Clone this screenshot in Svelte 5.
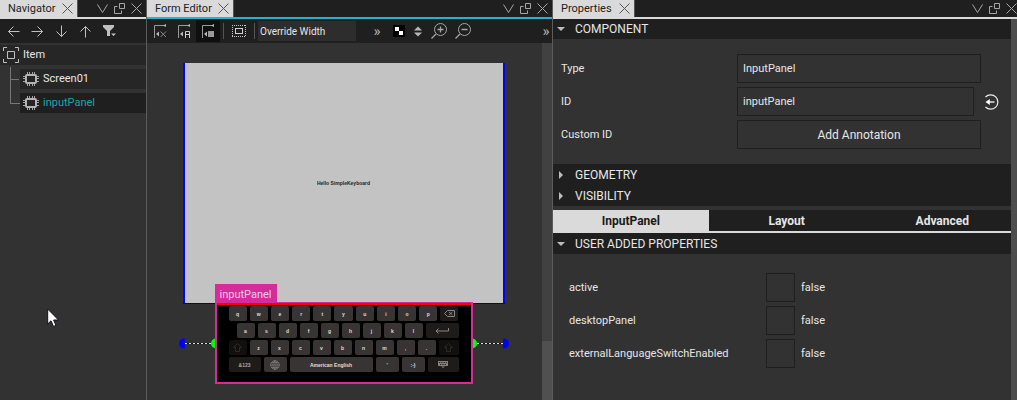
<script>
  let width = $state('Override Width');
  let type = $state('InputPanel');
  let id = $state('inputPanel');
  let flags = $state([
    { name: 'active', on: false },
    { name: 'desktopPanel', on: false },
    { name: 'externalLanguageSwitchEnabled', on: false }
  ]);
  const arrows = [
    { name: 'Left', d: 'M12.5 6.5H1.5M6.5 1.5L1.5 6.5L6.5 11.5' },
    { name: 'Right', d: 'M.5 6.5H11.5M6.5 1.5L11.5 6.5L6.5 11.5' },
    { name: 'Down', d: 'M6.5 .5V11.5M1.5 6.5L6.5 11.5L11.5 6.5' },
    { name: 'Up', d: 'M6.5 12.5V1.5M1.5 6.5L6.5 1.5L11.5 6.5' }
  ];
  const row1 = ['q', 'w', 'e', 'r', 't', 'y', 'u', 'i', 'o', 'p'];
  const row2 = ['a', 's', 'd', 'f', 'g', 'h', 'j', 'k', 'l'];
  const row3 = ['z', 'x', 'c', 'v', 'b', 'n', 'm', ',', '.'];
</script>

{#snippet cross()}
  <svg width="11" height="11" viewBox="0 0 11 11"><path d="M.5 .5L10.5 10.5M10.5 .5L.5 10.5" /></svg>
{/snippet}

{#snippet paneHead(title, kind)}
  <header class="head {kind}">
    <div class="tab">
      <span>{title}</span>
      <button aria-label="Close tab">{@render cross()}</button>
    </div>
    <div class="wins">
      <button aria-label="Panel list"><svg width="11" height="11" viewBox="0 0 11 11"><path d="M.5 1.5L5.5 9.5L10.5 1.5" /></svg></button>
      <button aria-label="Detach"><svg width="11" height="11" viewBox="0 0 11 11"><path d="M5.5 .5H10.5V5.5H5.5ZM3.5 3.5H.5V10.5H7.5V7.5" /></svg></button>
      <button aria-label="Close">{@render cross()}</button>
    </div>
  </header>
{/snippet}

{#snippet chip()}
  <svg class="chip" width="16" height="14" viewBox="0 0 16 14">
    <path d="M4.5 0V14M6.5 0V14M9.5 0V14M11.5 0V14M0 4.5H16M0 6.5H16M0 9.5H16" stroke="#a4a4a4" />
    <rect x="3" y="3" width="10" height="8" rx="1" fill="#252525" stroke="#b4b4b4" stroke-width="2" />
  </svg>
{/snippet}

{#snippet anchor()}
  <path d="M1.5 14V1.5H13" stroke="#9a9a9a" /><path d="M13 0V3L10 1.5ZM3 10L6 7.5V12.5Z" fill="#b8b8b8" stroke="none" />
{/snippet}

{#snippet shift()}
  <svg width="9" height="9" viewBox="0 0 9 9"><path d="M4.5 .5L8.5 4.5H6.5V8.5H2.5V4.5H.5Z" stroke="#2c2a27" /></svg>
{/snippet}

{#snippet zoomIcon(plus)}
  <svg width="16" height="16" viewBox="0 0 16 16"><circle cx="9.5" cy="6.5" r="6" /><path d="M5 11L.5 15.5M6.5 6.5H12.5" stroke-width="1.3" />{#if plus}<path d="M9.5 3.5V9.5" stroke-width="1.3" />{/if}</svg>
{/snippet}

{#snippet tri(open)}
  <svg width="8" height="8" viewBox="0 0 8 8"><path d={open ? 'M0 2H8L4 6Z' : 'M2 0L6 4L2 8Z'} fill="#bdbdbd" stroke="none" /></svg>
{/snippet}

<main>
  <section class="pane">
    {@render paneHead('Navigator', 'nav')}
    <div class="tools">
      {#each arrows as a}
        <button aria-label={a.name}><svg width="13" height="13" viewBox="0 0 13 13"><path d={a.d} stroke="#c0c0c0" /></svg></button>
      {/each}
      <button aria-label="Filter"><svg width="14" height="12" viewBox="0 0 14 12"><path d="M1 0H12V2L8 6V11H5V6L1 2ZM9 8.500H14L11.500 11Z" fill="#c0c0c0" stroke="none" /></svg></button>
    </div>
    <div class="tree">
      <div class="node root">
        <svg width="16" height="16" viewBox="0 0 16 16"><path d="M4 .5H.5V4M12 .5H15.500V4M.5 12V15.500H4M15.500 12V15.500H12M4.500 4.500H11.500V11.500H4.500Z" stroke="#c0c0c0" /></svg>
        <span>Item</span>
      </div>
      <div class="kids">
        <div class="node">{@render chip()}<span>Screen01</span></div>
        <div class="node sel">{@render chip()}<span>inputPanel</span></div>
      </div>
      <svg class="cursor" width="13" height="20" viewBox="0 0 13 20"><path d="M.7 1V16L4 12.800L6.500 18.500L9 17.400L6.600 12H11.500Z" fill="#fff" stroke="#111122" /></svg>
    </div>
  </section>

  <section class="pane">
    {@render paneHead('Form Editor', 'design')}
    <div class="tools">
      <button aria-label="No snapping"><svg width="14" height="14" viewBox="0 0 14 14">{@render anchor()}<path d="M7.500 7.500L13 13M13 7.500L7.500 13" stroke="#8a8a8a" /></svg></button>
      <button aria-label="Snap with anchors"><svg width="14" height="14" viewBox="0 0 14 14">{@render anchor()}<path d="M8.500 14V7.500H12.500V14M8 10.500H12" stroke="#d0d0d0" /></svg></button>
      <button class="on" aria-label="Snap without anchors"><svg width="14" height="14" viewBox="0 0 14 14">{@render anchor()}<rect x="7" y="7" width="6" height="6" fill="#999" stroke="none" /></svg></button>
      <i class="sep"></i>
      <button aria-label="Bounding rectangles"><svg width="14" height="12" viewBox="0 0 14 12"><path d="M0 .5H14M0 11.500H14M.5 0V12M13.500 0V12" stroke="#c8c8c8" stroke-dasharray="1 1" /><rect x="3.500" y="3.500" width="7" height="5" stroke="#d0d0d0" /></svg></button>
      <i class="sep"></i>
      <input class="override" aria-label="Override width" bind:value={width} />
      <button class="more first" aria-label="More">»</button>
      <button aria-label="Background"><svg width="12" height="12" viewBox="0 0 12 12"><rect width="12" height="12" fill="#000" stroke="none" /><path d="M2 2H6V6H2ZM6 6H10V10H6Z" fill="#fff" stroke="none" /></svg></button>
      <button class="spin" aria-label="Choose background"><svg width="8" height="11" viewBox="0 0 8 11"><path d="M0 4.500L4 .5L8 4.500ZM0 6.500H8L4 10.500Z" fill="#b8b8b8" stroke="none" /></svg></button>
      <button aria-label="Zoom in">{@render zoomIcon(true)}</button>
      <button aria-label="Zoom out">{@render zoomIcon(false)}</button>
      <button class="more last" aria-label="More tools">»</button>
    </div>
    <div class="editor">
      <div class="canvas">
        <div class="stage">
          <div class="screen">Hello SimpleKeyboard</div>
          <svg class="links" width="332" height="12" viewBox="0 0 332 12">
            <path d="M7 6.500H325" stroke="#111" /><path d="M7 6.500H325" stroke="#ddd" stroke-dasharray="2 2" />
            <path d="M7 1.500H6A5 5 0 0 0 6 11.500H7ZM325 1.500H326A5 5 0 0 1 326 11.500H325Z" fill="#00f" stroke="none" />
            <circle cx="38" cy="6.500" r="5" fill="#0f0" stroke="none" /><circle cx="294" cy="6.500" r="5" fill="#0f0" stroke="none" />
          </svg>
          <div class="tag">inputPanel</div>
          <div class="keyboard">
            <div class="keys">
              {#each row1 as k}<button>{k}</button>{/each}
              <button class="dim" aria-label="Backspace"><svg width="11" height="7" viewBox="0 0 11 7"><path d="M3.500 .5H10.500V6.500H3.500L.5 3.500ZM5 2L8.500 5M8.500 2L5 5" stroke="#8a8784" /></svg></button>
            </div>
            <div class="keys second">
              {#each row2 as k}<button>{k}</button>{/each}
              <button class="dim" aria-label="Enter"><svg width="14" height="6" viewBox="0 0 14 6"><path d="M13.500 0V3H1M3.500 .5L1 3L3.500 5.500" stroke="#8a8784" /></svg></button>
            </div>
            <div class="keys third">
              <button class="off" aria-label="Left shift">{@render shift()}</button>
              {#each row3 as k}<button>{k}</button>{/each}
              <button class="off" aria-label="Right shift">{@render shift()}</button>
            </div>
            <div class="keys fourth">
              <button class="dim">&123</button>
              <button aria-label="Language"><svg width="10" height="10" viewBox="0 0 10 10"><circle cx="5" cy="5" r="4.300" stroke="#8a8784" stroke-width=".7" /><path d="M5 .5V9.500M.5 5H9.500M1.500 2.500H8.500M1.500 7.500H8.500M5 .5Q.5 5 5 9.500M5 .5Q9.500 5 5 9.500" stroke="#8a8784" stroke-width=".6" /></svg></button>
              <button>American English</button>
              <button>'</button>
              <button>:-)</button>
              <button class="dim" aria-label="Hide keyboard"><svg width="10" height="7" viewBox="0 0 10 7"><path d="M0 0H10V5H0ZM3 5.500H7L5 7Z" fill="#85817d" stroke="none" /><path d="M1 1.500H9M2 3.500H8" stroke="#2a2624" stroke-dasharray="1 .7" /></svg></button>
            </div>
          </div>
        </div>
      </div>
      <div class="scroll"><i></i></div>
    </div>
  </section>

  <section class="pane">
    {@render paneHead('Properties', 'props')}
    <div class="propbody">
      <div class="content">
        <button class="group">{@render tri(true)}COMPONENT</button>
        <div class="form">
          <div class="field"><label for="type">Type</label><input id="type" bind:value={type} /></div>
          <div class="field id">
            <label for="ident">ID</label><input id="ident" bind:value={id} />
            <button aria-label="Export as alias"><svg width="16" height="16" viewBox="0 0 16 16"><path d="M2.500 3A7.200 7.200 0 1 1 2.500 13" stroke="#eee" stroke-width="1.200" /><path d="M4 8H11.500" stroke="#fff" stroke-width="1.300" /><path d="M2.500 8L6.800 5V11Z" fill="#fff" stroke="none" /></svg></button>
          </div>
          <div class="field"><span class="lab">Custom ID</span><button class="note">Add Annotation</button></div>
        </div>
        <div class="folded">
          <button class="group">{@render tri(false)}GEOMETRY</button>
          <button class="group">{@render tri(false)}VISIBILITY</button>
        </div>
        <div class="tabs">
          <button class="current">InputPanel</button><button>Layout</button><button>Advanced</button>
        </div>
        <button class="group user">{@render tri(true)}USER ADDED PROPERTIES</button>
        <div class="flags">
          {#each flags as f}
            <div class="flag">
              <span>{f.name}</span>
              <label><input type="checkbox" aria-label={f.name} bind:checked={f.on} />{f.on}</label>
            </div>
          {/each}
        </div>
      </div>
      <div class="bar"></div>
    </div>
  </section>
</main>

<style>
  :global(body) { margin: 0; background: #323232; }
  * { box-sizing: border-box; }
  main {
    display: grid;
    grid-template-columns: 147px minmax(0, 7fr) minmax(0, 8fr);
    min-height: 100vh;
    overflow: hidden;
    background: #323232;
    color: #e6e6e6;
    font: 12px/16px Roboto, "Open Sans", sans-serif;
  }
  svg { display: block; flex: none; fill: none; stroke: #a6a6a6; }
  button, input { font: inherit; color: inherit; border: 0; padding: 0; margin: 0; background: none; border-radius: 0; }
  button { display: flex; align-items: center; justify-content: center; }
  .pane { display: flex; flex-direction: column; min-width: 0; border-right: 1px solid #5c5c5c; }
  .pane:last-child { border-right: 0; }

  .head { display: flex; height: 19px; background: #1f1f1f; border-bottom: 2px solid #dadada; justify-content: space-between; }
  .head.design { border-color: #2aafd3; }
  .tab { display: flex; align-items: center; justify-content: space-between; width: 78px; padding: 0 4px 0 8px; background: #dadada; color: #222; font-size: 11px; border-right: 1px solid #555; white-space: nowrap; }
  .design .tab { width: 87px; }
  .props .tab { width: 82px; }
  .tab svg { stroke: #555; }
  .wins { display: flex; align-items: center; gap: 6px; padding-right: 4px; }
  .props .wins { padding-right: 0; }

  .tools { display: flex; align-items: center; height: 24px; padding-left: 1px; background: #1f1f1f; }
  .tools button { width: 24px; height: 22px; flex: none; }
  .tools .on { background: #0f0f0f; }
  .sep { width: 1px; height: 16px; margin: 0 3px; background: #555; }
  .override { width: 98px; height: 20px; padding: 0 2px; background: #2d2d2d; font-size: 10px; }
  .tools .more { width: 20px; font-size: 15px; line-height: 20px; color: #b0b0b0; }
  .tools .first { margin-left: 11px; }
  .tools .last { width: 12px; margin-left: auto; }
  .tools .spin { width: 14px; margin-right: 2px; }

  .tree { position: relative; flex: 1; padding-top: 2px; font-size: 11px; }
  .node { display: flex; align-items: center; gap: 4px; height: 20px; padding-left: 3px; background: #262626; }
  .kids { position: relative; display: grid; gap: 4px; padding: 4px 0 0 20px; }
  .kids::before { content: ""; position: absolute; left: 10px; top: 2px; width: 9px; height: 36px; border: 1px solid #777; border-width: 0 0 1px 1px; }
  .kids::after { content: ""; position: absolute; left: 10px; top: 14px; width: 9px; height: 1px; background: #777; }
  .sel { background: #1f1f1f; color: #21a3a8; }
  .cursor { position: absolute; left: 47px; top: 265px; }

  .editor { display: flex; flex: 1; }
  .canvas { flex: 1; display: flex; justify-content: center; padding: 20px 2px 0 0; }
  .stage { position: relative; width: 322px; }
  .screen { display: flex; align-items: center; justify-content: center; height: 240px; border: 2px solid #00f; border-width: 0 2px; background: #c3c3c3; color: #222; font: bold 5px/6px "Liberation Sans", sans-serif; box-shadow: 0 1px #111; }
  .links { position: absolute; left: -5px; top: 274px; }
  .tag { position: absolute; left: 32px; top: 221px; height: 20px; padding: 0 5px; background: #d62c9a; color: #f0cde2; font-size: 11px; line-height: 21px; }
  .keyboard { position: absolute; left: 32px; top: 239px; width: 258px; height: 82px; border: 2px solid #d62c9a; border-top-width: 1px; background: #000; display: grid; grid-template-rows: repeat(4, 15px); row-gap: 2px; padding: 3px 12px 0; box-shadow: inset 0 2px #f00; align-content: start; }
  .keys { display: grid; grid-template-columns: repeat(11, 1fr); column-gap: 3px; color: #e0dedc; font: bold 5px/6px "Liberation Sans", sans-serif; }
  .keys button { background: #383433; border-radius: 2px; }
  .second { padding-left: 8px; grid-template-columns: repeat(9, 18px) 1fr; }
  .third { grid-template-columns: repeat(10, 18px) 1fr; }
  .fourth { grid-template-columns: 32px 23px 1fr 23px 23px 31px; }
  .keys .dim { background: #1e1b18; color: #aaa7a4; }
  .keys .off { background: #11100e; }
  .scroll { display: flex; flex-direction: column; width: 10px; background: #414141; }
  .scroll i { flex: 1; margin-top: 298px; background: #505050; }

  .propbody { display: flex; flex: 1; min-width: 0; }
  .content { flex: 1; min-width: 0; overflow: hidden; }
  .bar { width: 6px; background: #4d4d4d; }
  .group { width: 100%; height: 20px; justify-content: flex-start; gap: 10px; padding-left: 4px; background: #1f1f1f; }
  .form { display: grid; gap: 4px; padding: 15px 30px 15px 8px; font-size: 11px; }
  .field { display: flex; align-items: center; }
  .field label, .lab { width: 176px; flex: none; }
  .field input, .note { flex: 1; min-width: 0; height: 29px; border: 1px solid #1f1f1f; }
  .field input { padding: 0 5px; }
  .note { font-size: 12px; }
  .id { margin-right: -18px; }
  .id button { margin-left: 9px; }
  .folded { background: #1f1f1f; }
  .folded .group, .user { height: 21px; }
  .tabs { display: grid; grid-template-columns: repeat(3, 34%); height: 23px; margin-top: 4px; border-bottom: 2px solid #dadada; background: #1f1f1f; font-weight: bold; }
  .current { background: #dadada; color: #1a1a1a; }
  .flags { display: grid; gap: 4px; padding: 19px 16px 16px; font-size: 11px; }
  .flag { display: flex; align-items: center; }
  .flag span { width: 197px; }
  .flag label { display: flex; align-items: center; gap: 6px; }
  .flag input { appearance: none; width: 29px; height: 29px; border: 1px solid #1f1f1f; margin: 0; }
  .flag input:checked { background: #2aafd3; }
</style>
